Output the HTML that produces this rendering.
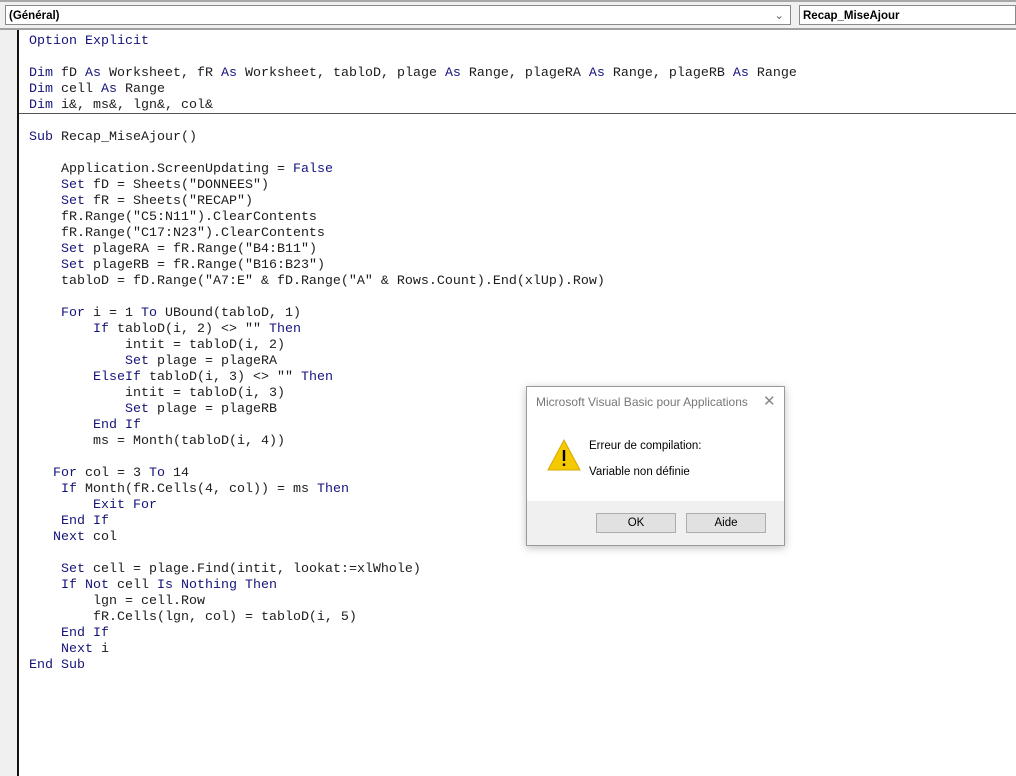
<!DOCTYPE html>
<html><head><meta charset="utf-8"><style>
body{margin:0;width:1016px;height:776px;overflow:hidden;background:#fff;position:relative;font-family:"Liberation Sans",sans-serif}
.top{position:absolute;left:0;top:0;width:1016px;height:30px;background:#f0f0f0;border-top:2px solid #a8a8a8;box-sizing:border-box;border-bottom:2px solid #a0a0a0}
.cb{position:absolute;top:3px;height:20px;background:#fff;border:1px solid #8a8a8a;font-size:11.5px;font-weight:bold;line-height:20px;padding-left:3px;box-sizing:border-box;color:#000}
.gut{position:absolute;left:0;top:30px;width:17px;height:746px;background:#f0f0f0;border-right:2px solid #111}
pre{position:absolute;left:29px;top:34px;margin:0;font-family:"Liberation Mono","Courier New",monospace;font-size:13.33px;line-height:16px;color:#1c1c1c}
.k{color:#14147a}
.sep{position:absolute;left:19px;top:113px;width:997px;height:1px;background:#555}
.dlg{position:absolute;left:526px;top:386px;width:259px;height:160px;background:#fff;border:1px solid #9a9a9a;box-sizing:border-box;box-shadow:0 2px 8px rgba(0,0,0,.25);font-size:11.5px}
.ttl{position:absolute;left:9px;top:8px;color:#777;font-size:12px}
.x{position:absolute;left:236px;top:5px;color:#888;font-size:15px}
.ft{position:absolute;left:0;top:114px;width:257px;height:44px;background:#f0f0f0}
.btn{position:absolute;top:126px;width:80px;height:20px;background:#e1e1e1;border:1px solid #adadad;box-sizing:border-box;text-align:center;line-height:18px;font-size:11.5px;color:#000}
</style></head><body>
<div class="top">
<div class="cb" style="left:5px;width:786px">(Général)<span style="position:absolute;right:6px;top:0;font-weight:normal;color:#666">&#8964;</span></div>
<div class="cb" style="left:799px;width:217px">Recap_MiseAjour</div>
</div>
<div class="gut"></div>
<div class="sep"></div>
<pre><span class="k">Option Explicit</span>

<span class="k">Dim</span> fD <span class="k">As</span> Worksheet, fR <span class="k">As</span> Worksheet, tabloD, plage <span class="k">As</span> Range, plageRA <span class="k">As</span> Range, plageRB <span class="k">As</span> Range
<span class="k">Dim</span> cell <span class="k">As</span> Range
<span class="k">Dim</span> i&amp;, ms&amp;, lgn&amp;, col&amp;

<span class="k">Sub</span> Recap_MiseAjour()

    Application.ScreenUpdating = <span class="k">False</span>
    <span class="k">Set</span> fD = Sheets("DONNEES")
    <span class="k">Set</span> fR = Sheets("RECAP")
    fR.Range("C5:N11").ClearContents
    fR.Range("C17:N23").ClearContents
    <span class="k">Set</span> plageRA = fR.Range("B4:B11")
    <span class="k">Set</span> plageRB = fR.Range("B16:B23")
    tabloD = fD.Range("A7:E" &amp; fD.Range("A" &amp; Rows.Count).End(xlUp).Row)

    <span class="k">For</span> i = 1 <span class="k">To</span> UBound(tabloD, 1)
        <span class="k">If</span> tabloD(i, 2) &lt;&gt; "" <span class="k">Then</span>
            intit = tabloD(i, 2)
            <span class="k">Set</span> plage = plageRA
        <span class="k">ElseIf</span> tabloD(i, 3) &lt;&gt; "" <span class="k">Then</span>
            intit = tabloD(i, 3)
            <span class="k">Set</span> plage = plageRB
        <span class="k">End If</span>
        ms = Month(tabloD(i, 4))

   <span class="k">For</span> col = 3 <span class="k">To</span> 14
    <span class="k">If</span> Month(fR.Cells(4, col)) = ms <span class="k">Then</span>
        <span class="k">Exit For</span>
    <span class="k">End If</span>
   <span class="k">Next</span> col

    <span class="k">Set</span> cell = plage.Find(intit, lookat:=xlWhole)
    <span class="k">If Not</span> cell <span class="k">Is Nothing Then</span>
        lgn = cell.Row
        fR.Cells(lgn, col) = tabloD(i, 5)
    <span class="k">End If</span>
    <span class="k">Next</span> i
<span class="k">End Sub</span></pre>
<div class="dlg">
<div class="ttl">Microsoft Visual Basic pour Applications</div>
<div class="x">&#10005;</div>
<svg style="position:absolute;left:20px;top:51px" width="34" height="34" viewBox="0 0 34 34"><path d="M17 2 L33 32 L1 32 Z" fill="#f5c900" stroke="#d9a800" stroke-width="1"/><rect x="15.8" y="12" width="2.4" height="11" fill="#000"/><rect x="15.8" y="25.5" width="2.4" height="2.4" fill="#000"/></svg>
<div style="position:absolute;left:62px;top:53px">Erreur de compilation:</div>
<div style="position:absolute;left:62px;top:79px">Variable non définie</div>
<div class="ft"></div>
<div class="btn" style="left:69px">OK</div>
<div class="btn" style="left:159px">Aide</div>
</div>
</body></html>
